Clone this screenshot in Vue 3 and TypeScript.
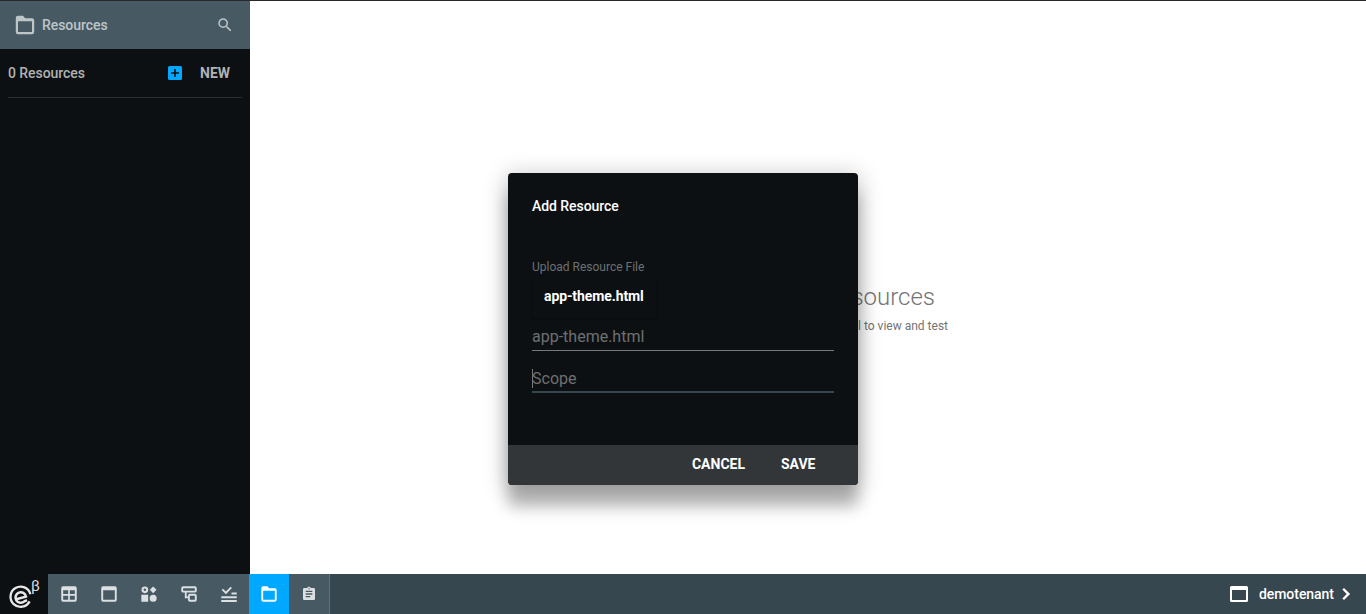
<script setup lang="ts">
interface Tool { name: string; path: string; active?: boolean; small?: boolean }

const folder = 'M5 2.800h5l2.200 2.400H19a2.200 2.200 0 0 1 2.200 2.200V19a2.200 2.200 0 0 1-2.200 2.200H5A2.200 2.200 0 0 1 2.800 19V5A2.200 2.200 0 0 1 5 2.800zm0 5.400V19h14V8.200z'
const tools: Tool[] = [
  { name: 'Dashboards', path: 'M5 2.700h14A2.300 2.300 0 0 1 21.300 5v14a2.300 2.300 0 0 1-2.300 2.300H5A2.300 2.300 0 0 1 2.700 19V5A2.300 2.300 0 0 1 5 2.700zm0 4.800V12h6V7.500zm8 0V12h6V7.500zM5 14v5h6v-5zm8 0v5h6v-5z' },
  { name: 'Views', path: 'M5 2.700h14A2.300 2.300 0 0 1 21.300 5v14a2.300 2.300 0 0 1-2.300 2.300H5A2.300 2.300 0 0 1 2.700 19V5A2.300 2.300 0 0 1 5 2.700zm0 4.800V19h14V7.500z' },
  { name: 'Elements', path: 'M7 3a4 4 0 1 1 0 8 4 4 0 0 1 0-8zm0 2.500a1.500 1.500 0 1 0 0 3 1.500 1.500 0 0 0 0-3zM17 3l4 4-4 4-4-4zM2.800 13H11v8.200H2.800zM17 12.800a4.200 4.200 0 1 1 0 8.400 4.200 4.200 0 0 1 0-8.400z' },
  { name: 'Flows', path: 'M5 2.700h14A2.300 2.300 0 0 1 21.300 5v3a2.300 2.300 0 0 1-2.300 2.300H9.200v4.600h1.600V14a2.300 2.300 0 0 1 2.300-2.300H19a2.300 2.300 0 0 1 2.300 2.300v5a2.300 2.300 0 0 1-2.300 2.300h-5.900a2.300 2.300 0 0 1-2.300-2.300v-1.900H7v-6.800H5A2.300 2.300 0 0 1 2.700 8V5A2.300 2.300 0 0 1 5 2.700zM5 5v3h14V5zm8 9v5h6v-5z' },
  { name: 'Rules', path: 'M2.700 14.700h18.600V17H2.700zm0 4.500h18.600v2.300H2.700zM15 10.200h6.300v2.300H15zM3.200 7.200L4.800 5.600l3.500 3.400 5.600-5.800L15.500 4.800l-7.200 7.400z' },
  { name: 'Resources', path: folder, active: true },
  { name: 'Reports', small: true, path: 'M19 3h-4.180C14.400 1.840 13.300 1 12 1c-1.300 0-2.400.84-2.820 2H5c-1.100 0-2 .9-2 2v14c0 1.100.9 2 2 2h14c1.100 0 2-.9 2-2V5c0-1.100-.9-2-2-2zm-7 0c.55 0 1 .45 1 1s-.45 1-1 1-1-.45-1-1 .45-1 1-1zm2 14H7v-2h7v2zm3-4H7v-2h10v2zm0-4H7V7h10v2z' },
]
</script>

<template>
  <div class="app">
    <main class="body">
      <aside class="sidebar">
        <header class="side-head">
          <svg class="i24" viewBox="0 0 24 24"><path :d="folder" fill-rule="evenodd" /></svg>
          <span class="side-title">Resources</span>
          <svg class="search" viewBox="0 0 24 24"><path d="M15.500 14h-.79l-.28-.27A6.471 6.471 0 0 0 16 9.500 6.500 6.500 0 1 0 9.500 16c1.610 0 3.090-.59 4.230-1.570l.27.28v.79l5 4.990L20.490 19l-4.990-5zm-6 0C7.010 14 5 11.990 5 9.500S7.010 5 9.500 5 14 7.010 14 9.500 11.990 14 9.500 14z" /></svg>
        </header>
        <div class="count">
          <span class="num">0 Resources</span>
          <svg class="add" viewBox="0 0 14 14"><rect width="14" height="14" rx="1.500" /><path d="M6.200 3h1.600v3.200H11v1.600H7.800V11H6.200V7.800H3V6.200h3.200z" /></svg>
          <span class="new">NEW</span>
        </div>
      </aside>
      <section class="empty">
        <h2>Resources</h2>
        <p>Select a resource from the left panel to view and test</p>
      </section>
    </main>

    <footer class="bar">
      <div class="logo">
        <svg viewBox="0 0 48 40" fill="none">
          <path d="M30.400 20.200A10.100 10.100 0 1 0 29.600 27.400" stroke-width="2.300" />
          <path d="M17 25L26 22.600A5.300 5.300 0 1 0 24.400 27.400L27 26.200" stroke-width="2.500" />
        </svg>
        <sup>β</sup>
      </div>
      <nav>
        <div v-for="t in tools" :key="t.name" class="tool" :class="{ active: t.active, small: t.small }">
          <svg viewBox="0 0 24 24"><path :d="t.path" fill-rule="evenodd" /></svg>
        </div>
      </nav>
      <div class="tenant">
        <svg class="i24" viewBox="0 0 24 24"><path d="M4.500 4h15A1.500 1.500 0 0 1 21 5.500v13a1.500 1.500 0 0 1-1.500 1.500h-15A1.500 1.500 0 0 1 3 18.500v-13A1.500 1.500 0 0 1 4.500 4zM5 8v10h14V8z" fill-rule="evenodd" /></svg>
        <span>demotenant</span>
        <svg class="i24 chev" viewBox="0 0 24 24"><path d="M8.300 7.600L10 5.900l6.100 6.100-6.100 6.100-1.700-1.700 4.400-4.400z" /></svg>
      </div>
    </footer>

    <div class="dialog">
      <h3>Add Resource</h3>
      <div class="content">
        <label>Upload Resource File</label>
        <div class="file">app-theme.html</div>
        <div class="field name">app-theme.html</div>
        <div class="field scope"><i class="caret"></i>Scope</div>
      </div>
      <div class="actions"><span class="cancel">CANCEL</span><span>SAVE</span></div>
    </div>
  </div>
</template>

<style>
body { margin: 0; overflow: hidden; }
</style>

<style scoped>
.app { position: relative; box-sizing: border-box; width: 100%; height: 614px; display: flex; flex-direction: column; border-top: 1px solid #29292b; background: #fff; font-family: Roboto, sans-serif; font-size: 14px; overflow: hidden; }
.body { flex: 1; display: flex; min-height: 0; }
svg { display: block; fill: currentColor; flex: none; }
.i24 { width: 24px; height: 24px; }
.sidebar { width: 250px; background: #0c1012; flex: none; }
.side-head { height: 48px; box-sizing: border-box; padding: 0 16px 0 13px; display: flex; align-items: center; background: #475a64; color: #bec5c8; }
.side-title { flex: 1; margin-left: 5px; font-weight: 500; letter-spacing: -.05px; }
.search { width: 18px; height: 18px; }
.count { height: 48px; margin: 0 8px; display: flex; align-items: center; border-bottom: 1px solid #2a2e30; color: #b1b2b3; }
.num { width: 160px; font-weight: 500; letter-spacing: -.05px; }
.add { width: 14px; height: 14px; fill: #00a8ff; }
.add path { fill: #0c1012; }
.new { margin-left: 18px; font-weight: 700; }
.empty { flex: 1; display: flex; flex-direction: column; align-items: flex-end; padding: 280px 418px 0 0; color: #737373; }
h2 { margin: 0 13px 0 0; font-size: 24px; line-height: 32px; font-weight: 300; }
p { margin: 5px 0 0; font-size: 12px; line-height: 16px; }
.bar { height: 40px; flex: none; display: flex; background: #37474f; color: #dce0e2; }
.logo { position: relative; width: 48px; background: #0c1012; color: #fff; }
.logo svg { width: 48px; height: 40px; stroke: #e8e8e8; fill: none; }
.logo sup { position: absolute; left: 31px; top: 4px; font-size: 15px; line-height: 16px; color: #ddd; }
nav { display: flex; padding-left: 1px; background: #475a64; border-right: 1px solid #607078; }
.tool { width: 40px; display: flex; align-items: center; justify-content: center; }
.tool svg { width: 20px; height: 20px; }
.small svg { width: 16px; height: 16px; }
.active { background: #00a8ff; color: #fff; }
.tenant { margin-left: auto; display: flex; align-items: center; padding-right: 8px; color: #fff; font-weight: 500; }
.tenant span { margin-left: 8px; letter-spacing: -.04px; }
.dialog { position: absolute; left: 508px; top: 172px; width: 350px; height: 312px; display: flex; flex-direction: column; border-radius: 4px; background: #0c1012; color: #fff; box-shadow: 0 22px 16px rgba(0,0,0,.26), 0 4px 22px 3px rgba(0,0,0,.21); }
h3 { margin: 24px 24px 0; font-size: 14px; line-height: 18px; font-weight: 500; letter-spacing: -.06px; }
.content { flex: 1; padding: 44px 24px 0; }
label { display: block; color: #6d7071; font-size: 12px; line-height: 16px; }
.file { width: 124px; height: 42px; box-sizing: border-box; margin-top: 1px; padding-left: 12px; line-height: 40px; font-weight: 700; letter-spacing: -.1px; border-radius: 3px; box-shadow: 0 1px 2px rgba(0,0,0,.4); }
.field { position: relative; color: #6d7071; font-size: 16px; line-height: 24px; }
.name { margin-top: 7px; height: 25px; border-bottom: 1px solid #777979; }
.scope { margin-top: 16px; height: 24px; border-bottom: 2px solid #37474f; }
.caret { position: absolute; left: 0; top: 2px; width: 1px; height: 19px; background: #777; }
.actions { height: 40px; display: flex; align-items: center; justify-content: flex-end; box-sizing: border-box; padding: 0 42.500px 2px 0; border-radius: 0 0 4px 4px; background: #333639; font-weight: 700; }
.cancel { margin-right: 36px; }
</style>
